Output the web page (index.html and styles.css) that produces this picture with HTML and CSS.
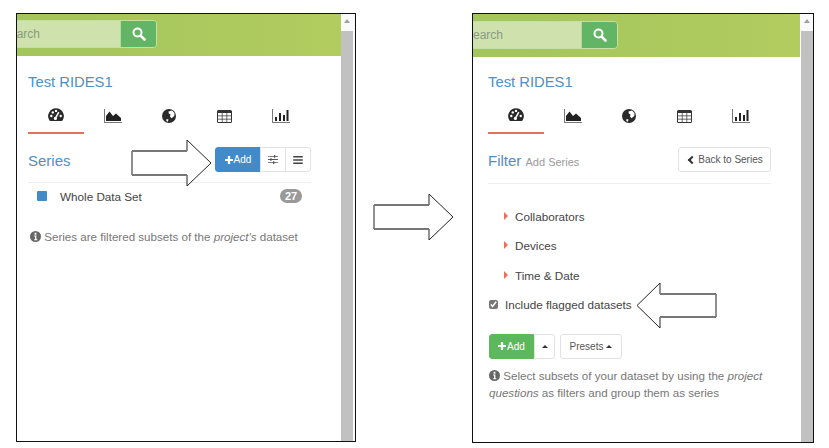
FILE: index.html
```html
<!DOCTYPE html>
<html lang="en">
<head>
    <meta charset="UTF-8" />
    <title>Series and Filter panels</title>
    <link rel="stylesheet" href="styles.css">
</head>
<body>
    <svg class="defs" width="0" height="0">
        <symbol id="i-gauge" viewBox="0 0 16 14">
            <path fill="#2a2a2a" d="M8 .3A7.800 7.800 0 0 0 1.200 12c.3.6.7 1 1.300 1h11c.6 0 1-.4 1.300-1A7.800 7.800 0 0 0 8 .3z"/>
            <g fill="#fff"><circle cx="3.300" cy="8" r="1.200"/><circle cx="4.800" cy="4.400" r="1.200"/><circle cx="8" cy="2.900" r="1.200"/><circle cx="12.700" cy="8" r="1.200"/></g>
            <path stroke="#fff" stroke-width="1.500" d="M7.400 10.400 10.800 4.200"/>
            <circle cx="7.400" cy="10.400" r="1.600" fill="#fff"/>
        </symbol>
        <symbol id="i-area" viewBox="0 0 18 14">
            <path fill="#777" d="M0 0h1v13h17v1H0z"/>
            <path fill="#222" d="M2 12V7l3.500-4.500L9 7l3-2.500L17 9v3z"/>
        </symbol>
        <symbol id="i-globe" viewBox="0 0 14 14">
            <circle cx="7" cy="7" r="7" fill="#2a2a2a"/>
            <path fill="#fff" d="M6.500 2.500 10 1.500 12.500 4 12.300 7 9.500 9.300 8 7.500 8.500 5.500 6.800 4.500zM4.500 10l2 .5-.7 2.200-1.500-.7z"/>
        </symbol>
        <symbol id="i-table" viewBox="0 0 15 13">
            <path fill="#333" d="M1.500 0h12A1.500 1.500 0 0 1 15 1.500v10a1.500 1.500 0 0 1-1.500 1.500h-12A1.500 1.500 0 0 1 0 11.500v-10A1.500 1.500 0 0 1 1.500 0z"/>
            <path fill="#fff" d="M1 3h3.800v2.500H1zM5.500 3h4v2.500h-4zM10.200 3H14v2.500h-3.800zM1 6.200h3.800v2.500H1zM5.500 6.200h4v2.500h-4zM10.200 6.200H14v2.500h-3.800zM1 9.400h3.800V12H1zM5.500 9.400h4V12h-4zM10.200 9.400H14V12h-3.800z"/>
        </symbol>
        <symbol id="i-bars" viewBox="0 0 18 14">
            <path fill="#777" d="M0 0h1v13h17v1H0z"/>
            <path fill="#222" d="M3 8h2v4H3zM7 4h2v8H7zM11 6h2v6h-2zM14.500 1h2v11h-2z"/>
        </symbol>
        <symbol id="i-search" viewBox="0 0 14 14">
            <circle cx="5.500" cy="5.500" r="4" fill="none" stroke="#fff" stroke-width="2"/>
            <path stroke="#fff" stroke-width="2.600" stroke-linecap="round" d="M8.800 8.800 12.500 12.500"/>
        </symbol>
        <symbol id="i-plus" viewBox="0 0 10 10">
            <path fill="#fff" d="M3.600 0h2.800v3.600H10v2.800H6.400V10H3.600V6.400H0V3.600h3.600z"/>
        </symbol>
        <symbol id="i-sliders" viewBox="0 0 11 10">
            <path fill="#555" d="M0 1h11v1H0zM0 4.500h11v1H0zM0 8h11v1H0zM6.500 0H8v3H6.500zM2.500 3.500H4v3H2.500zM5.500 7H7v3H5.500z"/>
        </symbol>
        <symbol id="i-menu" viewBox="0 0 12 10">
            <path fill="#444" d="M0 0h12v2H0zM0 4h12v2H0zM0 8h12v2H0z"/>
        </symbol>
        <symbol id="i-info" viewBox="0 0 12 12">
            <circle cx="6" cy="6" r="6" fill="#666"/>
            <path fill="#fff" d="M5 2h2v2H5zM4.500 5H7v4h1v1H4.500V9h1V6h-1z"/>
        </symbol>
    </svg>

    <main class="desk">
        <section class="window window-series">
            <div class="pane">
                <header class="topbar">
                    <div class="search">
                        <span class="search-field">Search</span>
                        <span class="search-btn"><svg width="14" height="14"><use href="#i-search"/></svg></span>
                    </div>
                </header>
                <div class="content">
                    <h2 class="project">Test RIDES1</h2>
                    <nav class="tabs">
                        <span class="tab active"><svg width="16" height="14"><use href="#i-gauge"/></svg></span>
                        <span class="tab tab-nudge"><svg width="18" height="14"><use href="#i-area"/></svg></span>
                        <span class="tab tab-nudge"><svg width="14" height="14"><use href="#i-globe"/></svg></span>
                        <span class="tab"><svg width="15" height="13"><use href="#i-table"/></svg></span>
                        <span class="tab tab-nudge"><svg width="18" height="14"><use href="#i-bars"/></svg></span>
                    </nav>
                    <div class="section-head">
                        <h3 class="section-title">Series</h3>
                        <div class="btn-group">
                            <span class="btn btn-blue btn-add"><svg width="8" height="8"><use href="#i-plus"/></svg>Add</span>
                            <span class="btn btn-icon"><svg width="10" height="9"><use href="#i-sliders"/></svg></span>
                            <span class="btn btn-icon"><svg width="10" height="8"><use href="#i-menu"/></svg></span>
                        </div>
                    </div>
                    <div class="series-row">
                        <span class="swatch"></span>
                        <span class="series-name">Whole Data Set</span>
                        <span class="badge">27</span>
                    </div>
                    <p class="hint hint-series"><svg width="11" height="11"><use href="#i-info"/></svg> Series are filtered subsets of the <em>project's</em> dataset</p>
                </div>
            </div>
            <div class="scrollbar"><span class="scroll-up"></span><span class="scroll-thumb"></span></div>
            <svg class="callout callout-add" width="81" height="48" viewBox="0 0 81 48">
                <path class="callout-fill" d="M1 12H56V1L80 24 56 47V36H1z"/>
                <path class="callout-thin" d="M1 12V36M56 12V1L80 24 56 47V36"/>
                <path class="callout-thick" d="M1 12H56M1 36H56"/>
            </svg>
        </section>

        <div class="between">
            <svg width="81" height="48" viewBox="0 0 81 48">
                <path class="callout-fill" d="M1 12H56V1L80 24 56 47V36H1z"/>
                <path class="callout-thin" d="M1 12V36M56 12V1L80 24 56 47V36"/>
                <path class="callout-thick" d="M1 12H56M1 36H56"/>
            </svg>
        </div>

        <section class="window window-filter">
            <div class="pane">
                <header class="topbar topbar-tall">
                    <div class="search search-filter">
                        <span class="search-field">Search</span>
                        <span class="search-btn"><svg width="14" height="14"><use href="#i-search"/></svg></span>
                    </div>
                </header>
                <div class="content content-filter">
                    <h2 class="project">Test RIDES1</h2>
                    <nav class="tabs">
                        <span class="tab active"><svg width="16" height="14"><use href="#i-gauge"/></svg></span>
                        <span class="tab tab-nudge"><svg width="18" height="14"><use href="#i-area"/></svg></span>
                        <span class="tab tab-nudge"><svg width="14" height="14"><use href="#i-globe"/></svg></span>
                        <span class="tab"><svg width="15" height="13"><use href="#i-table"/></svg></span>
                        <span class="tab tab-nudge"><svg width="18" height="14"><use href="#i-bars"/></svg></span>
                    </nav>
                    <div class="section-head section-head-filter">
                        <h3 class="section-title">Filter <small>Add Series</small></h3>
                        <span class="btn btn-back"><span class="chevron"></span>Back to Series</span>
                    </div>
                    <ul class="filters">
                        <li>Collaborators</li>
                        <li>Devices</li>
                        <li>Time &amp; Date</li>
                    </ul>
                    <label class="flagged"><input type="checkbox" checked> Include flagged datasets</label>
                    <div class="actions">
                        <div class="btn-group">
                            <span class="btn btn-green btn-add"><svg width="8" height="8"><use href="#i-plus"/></svg>Add</span>
                            <span class="btn btn-caret"><span class="caret"></span></span>
                        </div>
                        <span class="btn btn-presets">Presets <span class="caret"></span></span>
                    </div>
                    <p class="hint hint-filter"><svg width="11" height="11"><use href="#i-info"/></svg> Select subsets of your dataset by using the <em>project questions</em> as filters and group them as series</p>
                </div>
            </div>
            <div class="scrollbar"><span class="scroll-up"></span><span class="scroll-thumb"></span></div>
            <svg class="callout callout-flag" width="81" height="47" viewBox="0 0 81 47">
                <path class="callout-fill" d="M80 12H24V1L1 23.500 24 46V35H80z"/>
                <path class="callout-thin" d="M80 12V35M24 12V1L1 23.500 24 46V35"/>
                <path class="callout-thick" d="M80 12H24M80 35H24"/>
            </svg>
        </section>
    </main>
</body>
</html>
```

FILE: styles.css
```css
* {
    box-sizing: border-box;
}

html,
body {
    margin: 0;
    height: 100%;
    background: #fff;
}

body {
    font-family: "Liberation Sans", Arial, sans-serif;
    font-size: 11.7px;
    color: #444;
    overflow: hidden;
}

.defs {
    position: absolute;
}

.desk {
    display: flex;
    align-items: flex-start;
    padding: 13px 0 0 16px;
}

.window {
    position: relative;
    display: flex;
    border: 1px solid #111;
    background: #fff;
}

.window-series {
    width: 340px;
    height: 429px;
}

.window-filter {
    width: 342px;
    height: 430px;
}

.pane {
    flex: 1;
    min-width: 0;
    overflow: hidden;
}

.scrollbar {
    width: 14px;
    flex: none;
    display: flex;
    flex-direction: column;
    align-items: flex-start;
    background: #fafafa;
}

.window-filter .scrollbar {
    width: 12px;
}

.scroll-up {
    width: 0;
    height: 0;
    margin: 5px 0 5px 3px;
    border: 3px solid transparent;
    border-top: 0;
    border-bottom: 4px solid #a0a0a0;
}

.scroll-thumb {
    flex: 1;
    width: 12px;
    margin-top: 3px;
    background: #c1c1c1;
}

/* green bar */
.topbar {
    height: 42px;
    padding-top: 6px;
    background: linear-gradient(to right, #a2c55c, #b2cc5f);
}

.topbar-tall {
    height: 43px;
    padding-top: 7px;
    margin-right: 1px;
}

.search {
    display: flex;
    width: 159px;
    height: 28px;
    margin-left: -19px;
    border: 1px solid #c5e0a0;
    border-radius: 4px;
}

.search-filter {
    width: 165px;
    margin-left: -20px;
}

.search-field {
    flex: 1;
    padding-left: 3px;
    line-height: 26px;
    font-size: 12px;
    color: #8a9a80;
    background: #cfe2ae;
}

.search-filter .search-field {
    padding-left: 11px;
}

.search-btn {
    display: flex;
    align-items: center;
    justify-content: center;
    width: 36px;
    background: #62b565;
    border-left: 1px solid #b8d89a;
    border-radius: 0 3px 3px 0;
}

.content {
    padding: 16px 0 0 11px;
}

.content-filter {
    padding: 15px 0 0 15px;
}

.project {
    margin: 0;
    font-size: 14.800px;
    font-weight: normal;
    line-height: 20px;
    color: #4f8fc4;
}

.tabs {
    display: flex;
    margin-top: 14px;
}

.tab {
    display: flex;
    align-items: center;
    justify-content: center;
    width: 56px;
    height: 28px;
    padding-bottom: 8px;
}

.tab-nudge {
    padding-left: 2px;
}

.tab.active {
    border-bottom: 2px solid #e8705a;
}

.section-head {
    display: flex;
    align-items: flex-start;
    justify-content: space-between;
    width: 283px;
    height: 36px;
    margin-top: 13px;
    border-bottom: 1px solid #eee;
}

.section-head-filter {
    height: 37px;
}

.section-title {
    margin: 4px 0 0;
    font-size: 15px;
    font-weight: normal;
    line-height: 20px;
    color: #4f8fc4;
}

.section-title small {
    font-size: 11px;
    color: #999;
}

.btn {
    display: inline-flex;
    align-items: center;
    justify-content: center;
    height: 25px;
    border: 1px solid #e2e2e2;
    background: #fff;
    font-size: 10px;
    color: #555;
}

.btn-group {
    display: flex;
}

.btn-add {
    gap: 1px;
    width: 46px;
    border-radius: 3px 0 0 3px;
    color: #fff;
}

.btn-blue {
    border-color: #428bca;
    background: #428bca;
}

.btn-green {
    width: 45px;
    border-color: #5cb85c;
    background: #5cb85c;
}

.btn-icon {
    width: 26px;
    margin-left: -1px;
}

.btn-icon:last-child {
    border-radius: 0 3px 3px 0;
}

.btn-back {
    gap: 3px;
    width: 93px;
    border-radius: 3px;
}

.chevron {
    width: 6px;
    height: 6px;
    margin-left: 3px;
    border-left: 2px solid #333;
    border-bottom: 2px solid #333;
    transform: rotate(45deg);
}

.btn-caret {
    width: 21px;
    border-radius: 0 3px 3px 0;
}

.btn-presets {
    gap: 3px;
    width: 62px;
    border-radius: 3px;
}

.caret {
    width: 0;
    height: 0;
    border: 3px solid transparent;
    border-top: 0;
    border-bottom: 3px solid #333;
}

.series-row {
    display: flex;
    align-items: center;
    width: 284px;
    height: 24px;
    padding: 0 10px 0 9px;
    margin-top: 1px;
}

.swatch {
    width: 10px;
    height: 10px;
    border-radius: 1px;
    background: #428bca;
}

.series-name {
    flex: 1;
    margin-left: 13px;
}

.badge {
    width: 22px;
    height: 14px;
    border-radius: 7px;
    background: #999;
    color: #fff;
    font-size: 11px;
    font-weight: bold;
    line-height: 14px;
    text-align: center;
}

.hint {
    margin: 0;
    font-size: 11.600px;
    color: #777;
}

.hint svg {
    vertical-align: -1px;
}

.hint-series {
    margin: 22px 0 0 2px;
}

.filters {
    margin: 0;
    padding: 0 0 0 16px;
    margin-top: 17.500px;
    list-style: none;
}

.filters li {
    position: relative;
    height: 29.500px;
    padding-left: 11px;
    line-height: 29.500px;
    color: #444;
}

.filters li::before {
    content: "";
    position: absolute;
    left: 0;
    top: 10px;
    border: 4px solid transparent;
    border-right: 0;
    border-left: 4px solid #e8705a;
}

.flagged {
    display: flex;
    align-items: center;
    height: 29px;
    gap: 7px;
    color: #444;
}

.flagged input {
    width: 9px;
    height: 9px;
    margin: 0 0 0 1px;
    accent-color: #777;
}

.actions {
    display: flex;
    gap: 5px;
    margin: 14.500px 0 0 1px;
}

.hint-filter {
    width: 285px;
    margin: 8px 0 0 1px;
    line-height: 17px;
}

/* hand-drawn arrows pasted over the screenshots */
.between {
    width: 116px;
    height: 429px;
    padding: 180px 0 0 17px;
}

.callout {
    position: absolute;
}

.callout-add {
    left: 114px;
    top: 125px;
}

.callout-flag {
    left: 163px;
    top: 268px;
}

.callout-fill {
    fill: #fff;
}

.callout-thin {
    fill: none;
    stroke: #222;
}

.callout-thick {
    fill: none;
    stroke: #777;
    stroke-width: 2;
}
```
